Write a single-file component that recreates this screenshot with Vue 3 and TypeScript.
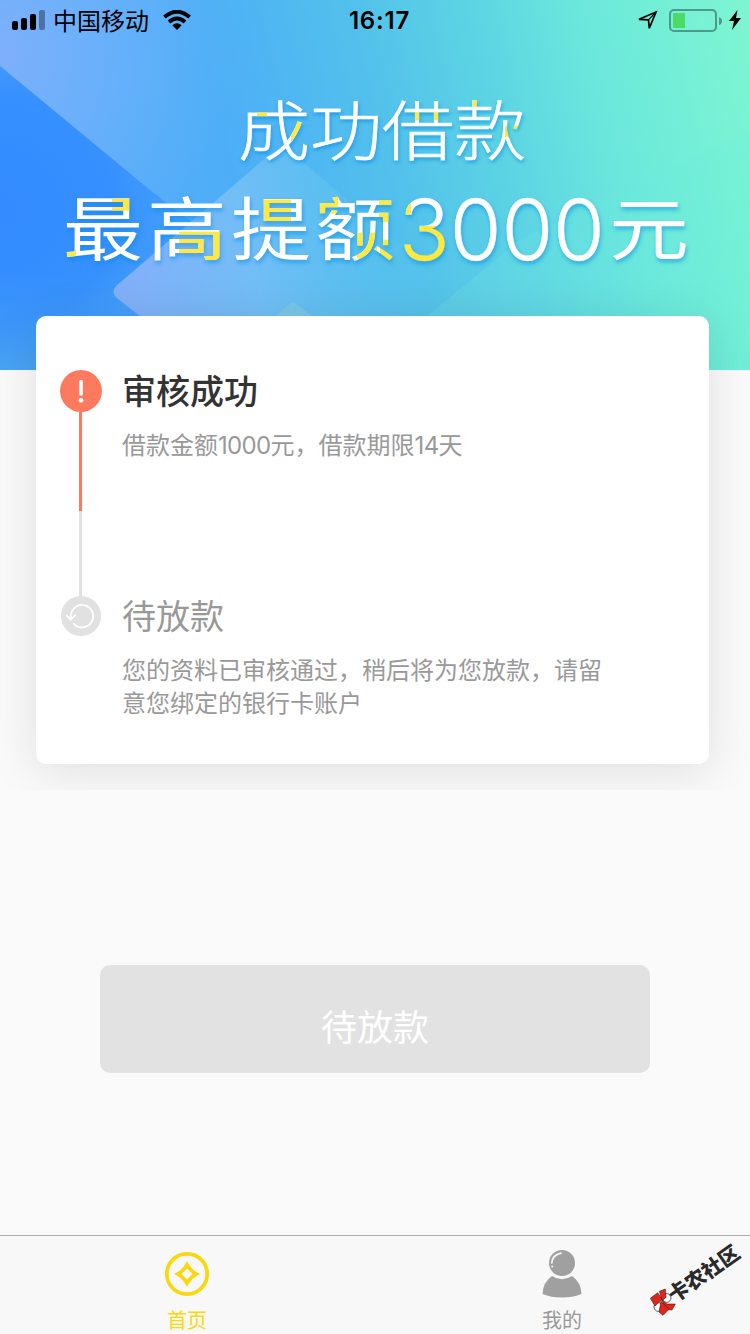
<script setup lang="ts">
interface Step {
  title: string
  detail: string
  state: 'done' | 'pending'
}

const steps: Step[] = [
  { title: '审核成功', detail: '借款金额1000元，借款期限14天', state: 'done' },
  { title: '待放款', detail: '您的资料已审核通过，稍后将为您放款，请留意您绑定的银行卡账户', state: 'pending' },
]

const splitNumbers = (text: string): string[] => text.split(/(\d+)/).filter(Boolean)
const isNumber = (part: string): boolean => /^\d+$/.test(part)
</script>

<template>
  <div class="page">
    <main class="overview">
      <header class="hero">
        <svg class="hero-art" viewBox="0 0 750 370" preserveAspectRatio="none">
          <defs>
            <linearGradient id="base" gradientUnits="userSpaceOnUse" x1="0" y1="190" x2="740" y2="10">
              <stop offset="0" stop-color="#5fa8fd" />
              <stop offset=".3" stop-color="#4daef7" />
              <stop offset=".5" stop-color="#52c0ec" />
              <stop offset=".65" stop-color="#5cd3e4" />
              <stop offset=".8" stop-color="#6be8dc" />
              <stop offset="1" stop-color="#7df5d2" />
            </linearGradient>
            <radialGradient id="glow" gradientUnits="userSpaceOnUse" cx="0" cy="50" r="240">
              <stop offset="0" stop-color="#82b0fb" stop-opacity=".9" />
              <stop offset="1" stop-color="#77b9fa" stop-opacity="0" />
            </radialGradient>
            <radialGradient id="deep" gradientUnits="userSpaceOnUse" cx="0" cy="210" r="330">
              <stop offset="0" stop-color="#338bff" />
              <stop offset=".35" stop-color="#3690fe" />
              <stop offset="1" stop-color="#43b0f8" stop-opacity="0" />
            </radialGradient>
            <linearGradient id="tile" gradientUnits="userSpaceOnUse" x1="120" y1="300" x2="420" y2="230">
              <stop offset="0" stop-color="#84aefb" />
              <stop offset=".45" stop-color="#72bef7" />
              <stop offset="1" stop-color="#5bcbe9" stop-opacity=".1" />
            </linearGradient>
            <linearGradient id="mint" gradientUnits="userSpaceOnUse" x1="430" y1="300" x2="740" y2="330">
              <stop offset="0" stop-color="#72e1e4" />
              <stop offset="1" stop-color="#66efda" stop-opacity=".5" />
            </linearGradient>
            <linearGradient id="floor" x1="0" y1="0" x2="0" y2="1">
              <stop offset="0" stop-color="#60bcd8" stop-opacity="0" />
              <stop offset="1" stop-color="#60bcd8" stop-opacity=".25" />
            </linearGradient>
          </defs>
          <rect width="750" height="370" fill="url(#base)" />
          <rect width="750" height="370" fill="url(#glow)" />
          <path d="M0 66 L150 190 L330 330 L360 370 H0Z" fill="url(#deep)" />
          <path d="M116 286 L268 156 Q282 144 296 156 L505 335 L480 370 H210 L118 299 Q110 293 116 286Z" fill="url(#tile)" />
          <path d="M275 316 L288 305 Q293 301 298 305 L312 316Z" fill="#7cc6ea" />
          <path d="M427 316 L520 240 L750 130 V370 H427Z" fill="url(#mint)" opacity=".3" />
          <rect y="270" width="480" height="100" fill="url(#floor)" />
        </svg>

        <div class="status">
          <div class="carrier">
            <svg width="34" height="20" viewBox="0 0 34 20">
              <rect x="0" y="11" width="6" height="9" rx="2" />
              <rect x="9" y="8" width="6" height="12" rx="2" />
              <rect x="18" y="4" width="6" height="16" rx="2" />
              <rect x="27" y="0" width="6" height="20" rx="2" opacity=".35" />
            </svg>
            <span>中国移动</span>
            <svg class="wifi" width="28" height="20" viewBox="0 0 28 20">
              <g fill="none" stroke="#000" stroke-width="4">
                <path d="M1.4 7 Q14 -3.6 26.6 7" />
                <path d="M6 12 Q14 5 22 12" />
              </g>
              <path d="M9.3 15.2 Q14 11.4 18.7 15.2 L14 20Z" />
            </svg>
          </div>
          <time>16:17</time>
          <div class="power">
            <svg width="20" height="20" viewBox="0 0 20 20">
              <path d="M1 9.3 L18 2 L11.3 18.3 L10.5 9.8Z" fill="none" stroke="#000" stroke-width="1.7" />
              <path d="M10.5 9.8 L18 2" stroke="#000" stroke-width="1.2" />
            </svg>
            <svg class="battery" width="54" height="24" viewBox="0 0 54 24">
              <rect x="1" y="1" width="46" height="21" rx="4" fill="none" stroke="#4d9a89" stroke-width="2" />
              <rect x="4" y="4" width="12" height="15" rx="1" fill="#4cd964" />
              <path d="M50 8 Q53 9 53 12 Q53 15 50 16Z" fill="#4d9a89" />
            </svg>
            <svg width="12" height="20" viewBox="0 0 12 20"><path d="M8.5 0 L0 11 H5 L3 20 L12 8 H7Z" /></svg>
          </div>
        </div>

        <h2 class="slogan">成功借款</h2>
        <h1 class="amount"><span class="han">最高提额</span><span class="digits">3000</span><span class="unit">元</span></h1>
      </header>

      <section class="card">
        <article v-for="step in steps" :key="step.title" class="step" :class="step.state">
          <div class="rail">
            <svg v-if="step.state === 'done'" width="42" height="42" viewBox="0 0 42 42">
              <circle cx="21" cy="21" r="21" fill="#fd7a5e" />
              <path d="M21 11.5 V24" stroke="#fff" stroke-width="3.6" stroke-linecap="round" />
              <circle cx="21" cy="30.3" r="2.4" fill="#fff" />
            </svg>
            <svg v-else width="40" height="40" viewBox="0 0 40 40">
              <circle cx="20" cy="20" r="20" fill="#e1e1e1" />
              <g fill="none" stroke="#fff" stroke-width="1.8" stroke-linecap="round" stroke-linejoin="round">
                <path d="M9.8 23.3 V20 A11.2 11.2 0 1 1 12.8 27.8" />
                <path d="M5.7 19.5 L9.8 23.7 L14.3 19.2" />
              </g>
            </svg>
            <i v-if="step.state === 'done'" class="line"></i>
          </div>
          <div class="copy">
            <h3>{{ step.title }}</h3>
            <p><span v-for="(part, i) in splitNumbers(step.detail)" :key="i" :class="{ number: isNumber(part) }">{{ part }}</span></p>
          </div>
        </article>
      </section>
    </main>

    <button class="action" type="button" disabled>待放款</button>

    <nav class="tabs">
      <a class="tab active">
        <svg width="46" height="46" viewBox="0 0 46 46">
          <circle cx="23" cy="23" r="20.2" fill="none" stroke="#fbd70b" stroke-width="3.7" />
          <path d="M23 10 Q27 19 36 23 Q27 27 23 36 Q19 27 10 23 Q19 19 23 10Z M23 17.5 L17.5 23 L23 28.5 L28.5 23Z" fill="#fbd70b" fill-rule="evenodd" />
        </svg>
        <span>首页</span>
      </a>
      <a class="tab">
        <svg width="40" height="48" viewBox="0 0 40 48">
          <circle cx="20" cy="13" r="13" fill="#a0a0a0" />
          <path d="M9.8 13 Q10.2 5.2 19 3.2" fill="none" stroke="#f8f8f8" stroke-width="1.7" stroke-linecap="round" />
          <circle cx="10.2" cy="16.5" r="1" fill="#f8f8f8" />
          <path d="M10 26 Q20 32.5 30 26 Q39 32 39.5 44 Q31 47.5 20 47.5 Q9 47.5 .5 44 Q1 32 10 26Z" fill="#a0a0a0" />
        </svg>
        <span>我的</span>
      </a>
      <div class="stamp">
        <svg width="27" height="28" viewBox="26 156 81 84">
          <g fill="#fff" stroke="#111" stroke-width="2">
            <circle cx="79" cy="186" r="13" />
            <circle cx="54" cy="213" r="13" />
          </g>
          <g fill="#e1251b" stroke="#111" stroke-width="1.5">
            <path d="M30 187 L52 170 L66 190 L44 210Z" />
            <path d="M57 166 L75 159 L77 184 L66 194Z" />
            <path d="M64 192 L80 204 L105 204 L95 222 L78 220Z" />
            <path d="M62 196 L56 228 L68 238 L86 220Z" />
          </g>
        </svg>
        <span>卡农社区</span>
      </div>
    </nav>
  </div>
</template>

<style>
body { background: #fafafa; }
</style>

<style scoped>
.page {
  width: 750px;
  height: 1334px;
  overflow: hidden;
  display: flex;
  flex-direction: column;
  background: #fafafa;
  font-family: Inter, "Noto Sans CJK SC", sans-serif;
}
h1, h2, h3, p { margin: 0; }
svg { display: block; flex: none; }
.overview { height: 790px; flex: none; overflow: hidden; }
.hero { position: relative; height: 370px; }
.hero-art { position: absolute; inset: 0; width: 750px; height: 370px; }
.status {
  position: relative;
  height: 40px;
  padding: 0 9px 0 12px;
  box-sizing: border-box;
  display: grid;
  grid-template-columns: 1fr auto 1fr;
  align-items: center;
  font-size: 24px;
  color: #000;
}
.carrier, .power { display: flex; align-items: center; }
.carrier span { margin-left: 7px; padding-top: 3px; line-height: 37px; }
.wifi { margin-left: 14px; }
.status time { font-size: 24px; font-weight: 600; letter-spacing: .8px; padding: 2px 0 0 6px; line-height: 30px; }
.power { justify-content: flex-end; }
.battery { margin: 2px 6px 0 11px; }
.slogan, .amount span {
  color: transparent;
  white-space: nowrap;
  background-color: #fff;
  background-repeat: no-repeat;
  -webkit-background-clip: text;
  background-clip: text;
}
.slogan, .amount {
  position: relative;
  filter: drop-shadow(1px 3px 2px rgba(0, 137, 230, .55));
}
.slogan {
  width: 296px;
  margin: 52px 0 0 238px;
  height: 80px;
  line-height: 80px;
  font-size: 72px;
  font-weight: 300;
  -webkit-text-stroke: .8px transparent;
  transform: scaleY(.9);
  background-image:
    linear-gradient(#ffe940, #ffe940), linear-gradient(#ffe940, #ffe940),
    linear-gradient(#ffe940, #ffe940), linear-gradient(#ffe940, #ffe940),
    linear-gradient(#ffe940, #ffe940);
  background-size: 10px 8px, 10px 27px, 40px 9px, 11px 8px, 16px 13px;
  background-position: 19px 15px, 53px 24px, 165px 18px, 235px 4px, 267px 33px;
}
.amount {
  width: 640px;
  height: 100px;
  margin: 8px 0 0 63px;
  line-height: 100px;
  font-size: 80px;
  font-weight: 400;
  display: flex;
}
.amount .han, .amount .unit { transform: scaleY(.87); }
.amount .han {
  width: 338px;
  letter-spacing: 4px;
  background-image:
    linear-gradient(#ffe940, #ffe940), linear-gradient(#ffe940, #ffe940),
    linear-gradient(#ffe940, #ffe940), linear-gradient(#ffe940, #ffe940),
    linear-gradient(#ffe940, #ffe940), linear-gradient(#ffe940, #ffe940),
    linear-gradient(#ffe940, #ffe940), linear-gradient(#ffe940, #ffe940);
  background-size: 25px 14px, 11px 18px, 46px 42px, 31px 26px, 20px 19px, 18px 26px, 20px 30px, 16px 30px;
  background-position: 49px 14px, 2px 72px, 116px 52px, 197px 15px, 255px 12px, 316px 15px, 294px 53px, 317px 61px;
}
.amount .digits {
  width: 210px;
  margin-left: -2px;
  font-size: 84px;
  font-weight: 300;
  letter-spacing: -.2px;
  -webkit-text-stroke: .5px transparent;
  background-image: linear-gradient(#ffe940, #ffe940), linear-gradient(#ffe940, #ffe940);
  background-size: 12px 30px, 50px 50px;
  background-position: 0 16px, 0 46px;
}
.card {
  position: relative;
  width: 673px;
  height: 448px;
  margin: -54px 0 0 36px;
  padding: 54px 24px 0;
  box-sizing: border-box;
  border-radius: 10px;
  background: #fff;
  box-shadow: 0 8px 50px rgba(0, 0, 0, .11);
}
.step { display: flex; }
.step.done { height: 226px; }
.rail { width: 42px; display: flex; flex-direction: column; align-items: center; }
.line { width: 3px; flex: 1; margin-right: 1px; background: linear-gradient(#fd7a5e 99px, #e1e1e1 99px); }
.copy { width: 485px; margin-left: 20px; }
.copy h3 { font-size: 34px; font-weight: 500; line-height: 44px; color: #333; }
.copy p { margin-top: 15px; font-size: 24px; line-height: 33px; color: #999; }
.number { letter-spacing: -.65px; }
.pending h3 { font-weight: 400; color: #999; line-height: 41px; }
.pending p { margin-top: 17px; }
.action {
  width: 550px;
  height: 108px;
  margin: 175px 0 0 100px;
  padding: 18px 0 0;
  flex: none;
  border: 0;
  border-radius: 10px;
  background: #e2e2e2;
  color: #fff;
  font: 400 36px/52px Inter, "Noto Sans CJK SC", sans-serif;
}
.tabs {
  position: relative;
  height: 99px;
  margin-top: auto;
  box-sizing: border-box;
  border-top: 1px solid #adadad;
  background: #f8f8f8;
  display: flex;
  flex: none;
}
.tab { width: 375px; box-sizing: border-box; padding: 14px 1px 0 0; display: flex; flex-direction: column; align-items: center; color: #999; font-size: 20px; }
.tab svg { height: 48px; }
.tab span { line-height: 28px; margin-top: 9px; }
.tab.active { color: #fbd70b; }
.stamp {
  position: absolute;
  left: 649px;
  top: 52px;
  display: flex;
}
.stamp span {
  margin: -9px 0 0 -7px;
  transform: rotate(-35deg);
  transform-origin: 8px 14px;
  color: #2a2a2a;
  font-size: 20.5px;
  font-weight: 900;
  line-height: 28px;
  white-space: nowrap;
}
</style>
